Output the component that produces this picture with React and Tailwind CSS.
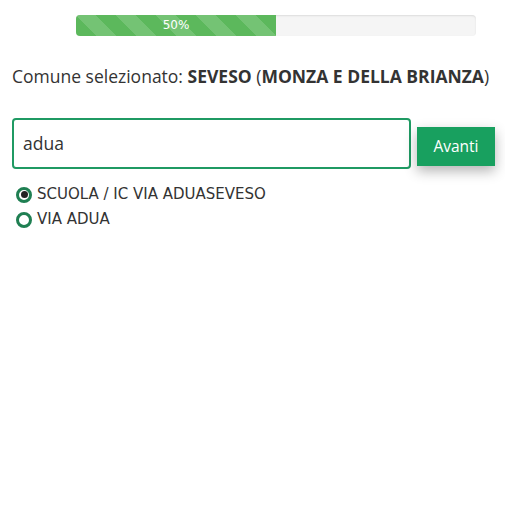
export default function App() {
  return (
    <div className="w-[505px] h-[505px] bg-white">
      <div className="pt-[15px] pl-[76px]">
        <div className="w-[400px] h-[21px] rounded-[4px] bg-[#f5f5f5] shadow-[inset_0_1px_2px_rgba(0,0,0,0.1)] overflow-hidden flex">
          <div className="w-1/2 h-full bg-[#5cb85c] bg-[linear-gradient(45deg,rgba(255,255,255,.15)_25%,transparent_25%,transparent_50%,rgba(255,255,255,.15)_50%,rgba(255,255,255,.15)_75%,transparent_75%,transparent)] bg-size-[40px_40px] text-white text-[12px] leading-[21px] text-center font-['DejaVu_Sans',sans-serif]">
            50%
          </div>
        </div>
      </div>
      <div className="pl-3">
        <p className="mt-[28px] text-[17.5px] leading-[24px] text-[#333] font-['Open_Sans',sans-serif] whitespace-nowrap">
          Comune selezionato: <b className="font-bold">SEVESO</b> (<b className="font-bold">MONZA E DELLA BRIANZA</b>)
        </p>
        <div className="mt-[30px] flex items-center gap-[6px]">
          <div className="shrink-0 w-[399px] h-[51px] border-2 border-[#1f9a63] rounded-[4px] flex items-center pl-[9px] text-[17.5px] text-[#333] font-['Open_Sans',sans-serif]">
            adua
          </div>
          <button className="shrink-0 mt-[6px] w-[78px] h-[39px] bg-[#18a05f] text-white text-[15.5px] font-['Open_Sans',sans-serif] shadow-[0_5px_12px_rgba(0,0,0,0.3)]">
            Avanti
          </button>
        </div>
        <div className="mt-[13px] flex flex-col font-['DejaVu_Sans',sans-serif] text-[15px] text-[#333] leading-[25px]">
          <div className="flex items-center gap-[5px]">
            <span className="w-[16px] h-[16px] rounded-full border-[3px] border-[#1f7f52] flex items-center justify-center ml-[4px]">
              <span className="w-[7px] h-[7px] rounded-full bg-[#222]" />
            </span>
            <span>SCUOLA / IC VIA ADUASEVESO</span>
          </div>
          <div className="flex items-center gap-[5px]">
            <span className="w-[16px] h-[16px] rounded-full border-[3px] border-[#1f7f52] ml-[4px]" />
            <span>VIA ADUA</span>
          </div>
        </div>
      </div>
    </div>
  );
}
